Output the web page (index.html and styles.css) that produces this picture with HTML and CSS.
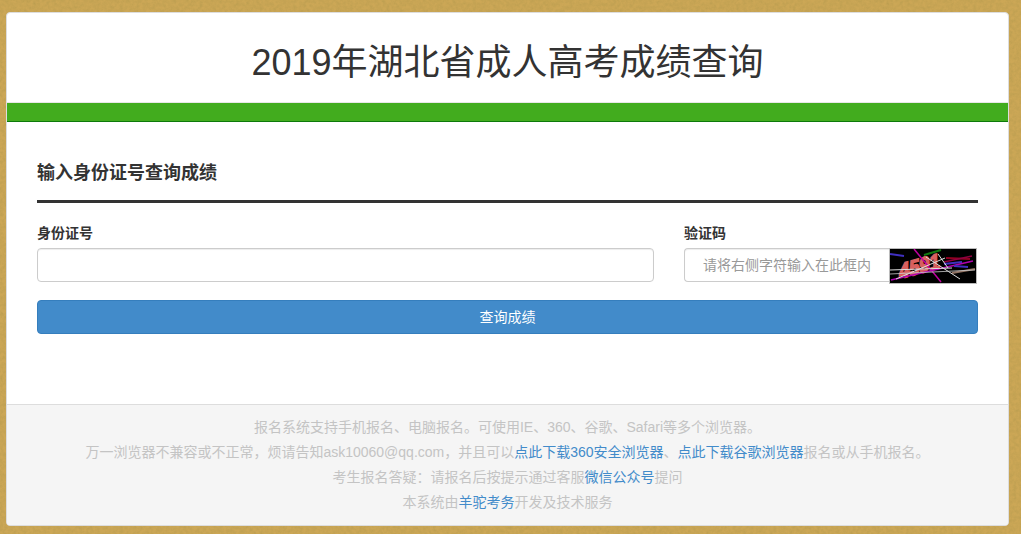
FILE: index.html
```html
<!DOCTYPE html>
<html lang="zh-CN">
<head>
<meta charset="utf-8">
<title>2019年湖北省成人高考成绩查询</title>
<link rel="stylesheet" href="styles.css">
</head>
<body>
<svg class="texture" aria-hidden="true"><filter id="sand"><feTurbulence type="fractalNoise" baseFrequency="0.3" numOctaves="4" seed="7"/><feColorMatrix values="0 0 0 0 0.5  0 0 0 0 0.34  0 0 0 0 0.08  1 1 0 0 -0.72"/></filter><rect width="100%" height="100%" filter="url(#sand)"/></svg>
<main class="panel">
  <header class="panel-head"><h1>2019年湖北省成人高考成绩查询</h1></header>
  <div class="green-bar"></div>
  <section class="panel-body">
    <h2>输入身份证号查询成绩</h2>
    <form class="form">
      <div class="fields">
        <div class="field field-id">
          <label for="sfz">身份证号</label>
          <input id="sfz" class="input" type="text">
        </div>
        <div class="field field-code">
          <label for="yzm">验证码</label>
          <div class="code-row">
            <input id="yzm" class="input input-code" type="text" placeholder="请将右侧字符输入在此框内">
            <svg class="captcha" viewBox="0 0 86 34" role="img" aria-label="验证码图片">
              <rect width="86" height="34" fill="#000"/>
              <text x="0" y="0" transform="translate(9 30) rotate(-15) skewX(-16)" class="captcha-text" textLength="42" lengthAdjust="spacingAndGlyphs">4591</text>
              <g fill="none">
                <path d="M0 5L14 7" stroke="#4030c0" stroke-width="2"/>
                <path d="M24 0L51 33" stroke="#c000a0" stroke-width="1.5"/>
                <path d="M34 6L51 1" stroke="#107a10" stroke-width="2"/>
                <path d="M56 9L80 10" stroke="#900020" stroke-width="2"/>
                <path d="M54 13L82 7" stroke="#900040" stroke-width="1.5"/>
                <path d="M54 15L72 13" stroke="#4030c0" stroke-width="2"/>
                <path d="M1 31L83 12" stroke="#b000b0" stroke-width="1.5"/>
                <path d="M62 24L85 20" stroke="#907060" stroke-width="2"/>
                <path d="M64 17L78 18" stroke="#4030c0" stroke-width="2"/>
                <path d="M0 21L62 19" stroke="#ddd" stroke-width="1"/>
                <path d="M6 30L55 9" stroke="#ddd" stroke-width="1"/>
                <path d="M36 8L70 30" stroke="#ddd" stroke-width="1"/>
                <path d="M0 25L85 21" stroke="#ccc" stroke-width=".8"/>
                <path d="M58 19L48 5" stroke="#ddd" stroke-width="1"/>
              </g>
            </svg>
          </div>
        </div>
      </div>
      <button class="submit" type="button">查询成绩</button>
    </form>
  </section>
  <footer class="panel-foot">
    <p>报名系统支持手机报名、电脑报名。可使用IE、360、谷歌、Safari等多个浏览器。</p>
    <p>万一浏览器不兼容或不正常，烦请告知ask10060@qq.com，并且可以<a href="#">点此下载360安全浏览器</a>、<a href="#">点此下载谷歌浏览器</a>报名或从手机报名。</p>
    <p>考生报名答疑：请报名后按提示通过客服<a href="#">微信公众号</a>提问</p>
    <p>本系统由<a href="#">羊驼考务</a>开发及技术服务</p>
  </footer>
</main>
</body>
</html>
```
FILE: styles.css
```css
* { box-sizing: border-box; }
html, body { margin: 0; height: 534px; overflow: hidden; }
body {
  background: #cca756;
  padding: 12px 12px 8px 6px;
  font-family: "Liberation Sans", "Noto Sans CJK SC", sans-serif;
  font-size: 14px;
  line-height: 20px;
  color: #333;
  position: relative;
}
.texture { position: absolute; left: 0; top: 0; width: 100%; height: 100%; }
.panel {
  position: relative;
  height: 514px;
  display: flex;
  flex-direction: column;
  background: #fff;
  border: 1px solid #ddd;
  border-radius: 4px;
  overflow: hidden;
}
.panel-head { height: 90px; padding-top: 30px; border-bottom: 1px solid #e7e7e7; text-align: center; }
h1 { margin: 0; font-size: 36px; line-height: 40px; font-weight: 400; }
.green-bar { height: 19px; background: #42ac1e; border-bottom: 1px solid #0d7a0a; }
.panel-body { flex: 1; padding: 31px 30px 0; }
h2 { margin: 0; padding: 10px 0 17px; font-size: 18px; line-height: 20px; font-weight: 700; border-bottom: 3px solid #333; }
.form { padding-top: 20px; }
.fields { display: flex; gap: 30px; }
.field-id { flex: 1; }
.field-code { width: 294px; }
label { display: block; font-weight: 700; font-size: 14px; line-height: 20px; margin-bottom: 5px; }
.input { display: block; width: 100%; height: 34px; padding: 6px 12px; border: 1px solid #ccc; border-radius: 4px; font: inherit; font-size: 14px; color: #555; background: #fff; box-shadow: inset 0 1px 1px rgba(0,0,0,.075); }
.code-row { display: flex; align-items: flex-start; padding-right: 1px; }
.input-code { flex: 1; min-width: 0; border-radius: 4px 0 0 4px; border-right: 0; padding-left: 18px; }
.input-code::placeholder { color: #999; opacity: 1; }
.captcha { width: 88px; height: 36px; flex: none; border: 1px solid #bbb; display: block; }
.captcha-text { font: 700 21px "Liberation Sans", sans-serif; fill: #d8605f; stroke: #d8605f; stroke-width: 1.6; }
.submit { display: block; width: 100%; height: 34px; margin-top: 16px; background: #428bca; border: 1px solid #357ebd; border-radius: 4px; color: #fff; font: inherit; font-size: 14px; }
.panel-foot { height: 121px; padding-top: 10px; background: #f5f5f5; border-top: 1px solid #ddd; text-align: center; font-size: 14px; line-height: 25px; color: #c4c4c4; }
.panel-foot p { margin: 0; }
.panel-foot a { color: #428bca; text-decoration: none; }
```
